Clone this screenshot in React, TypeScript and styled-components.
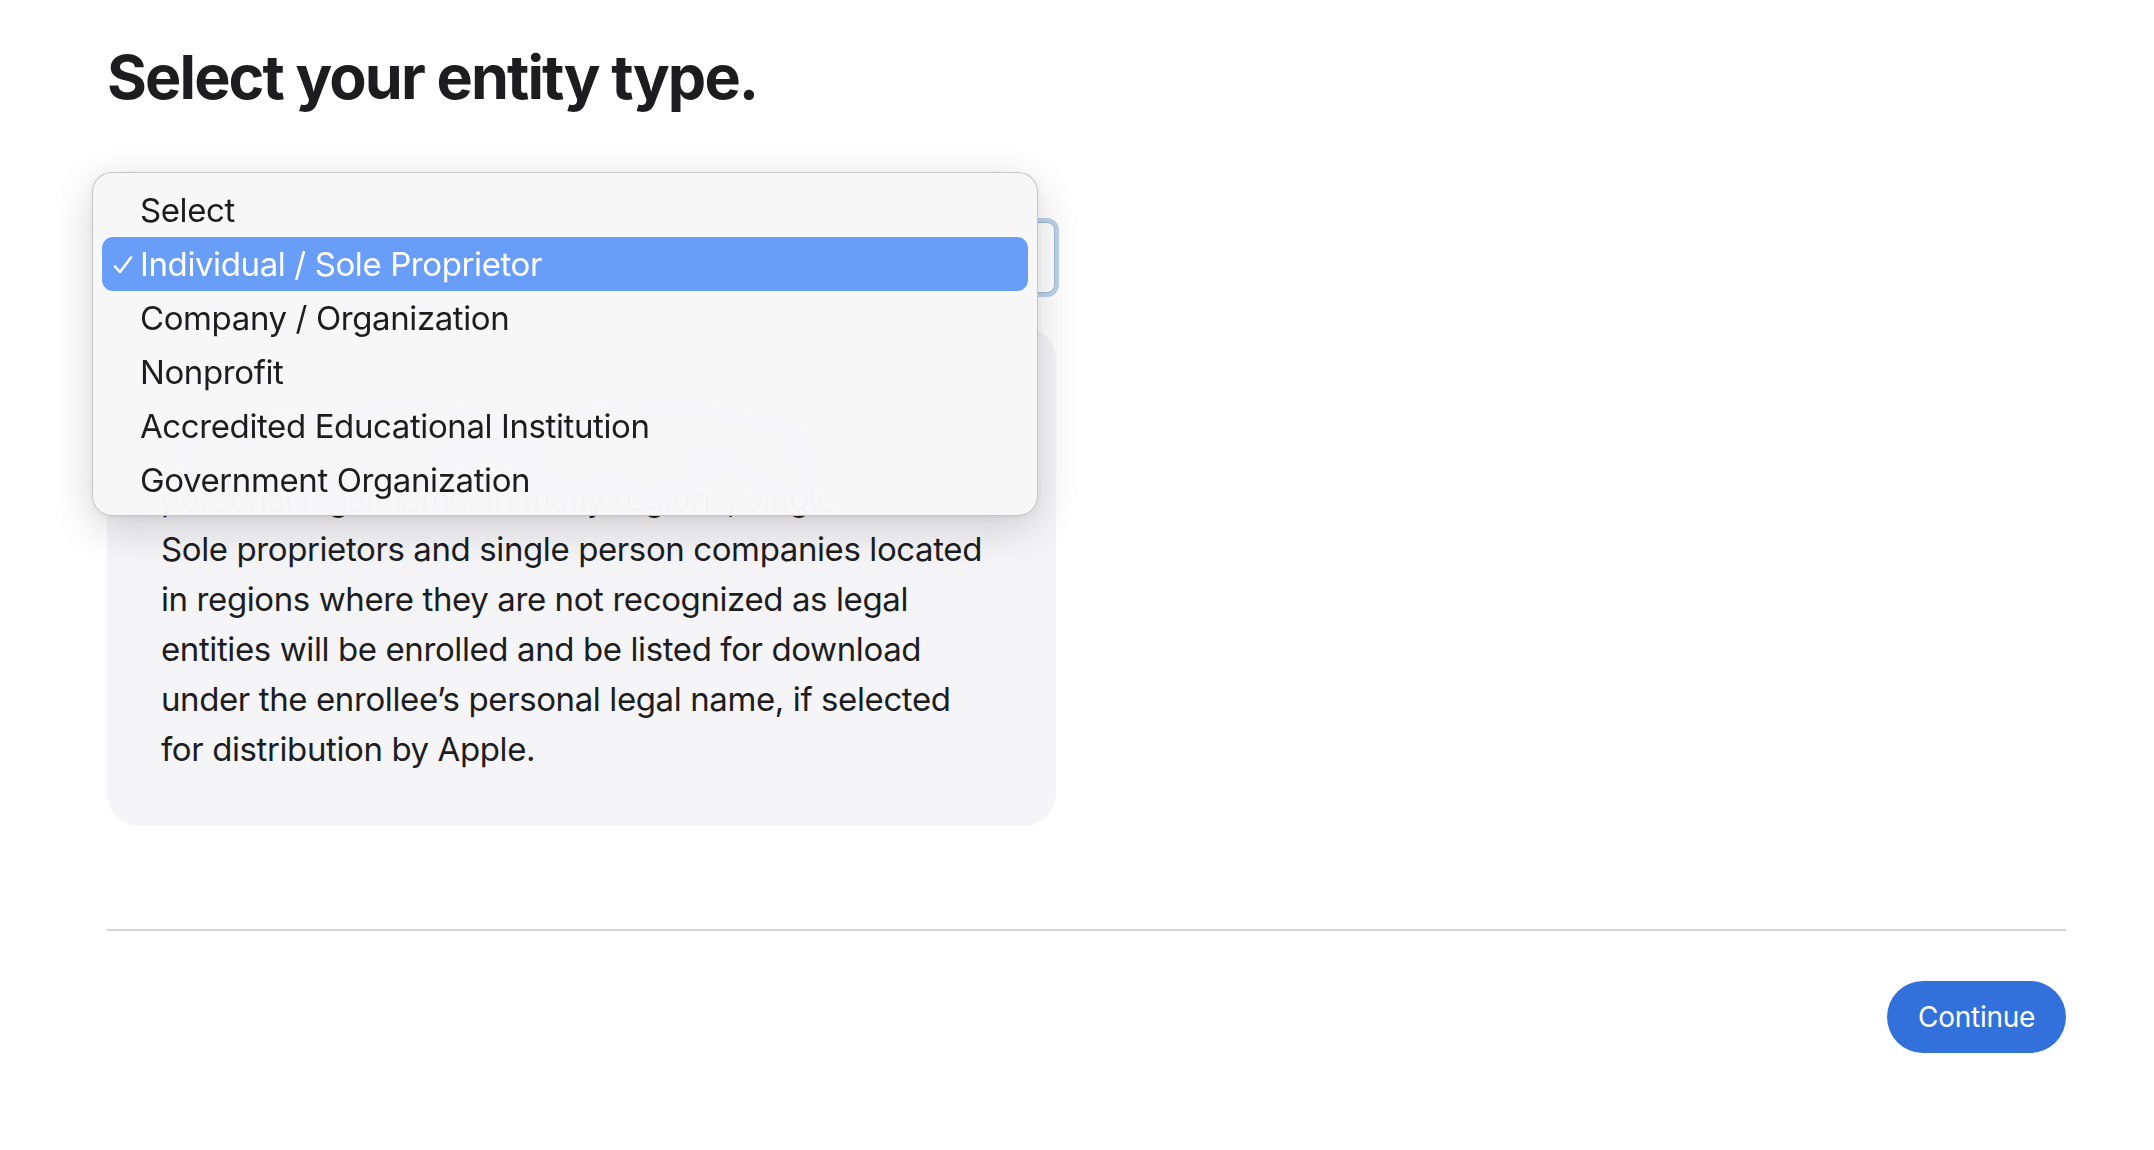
import React from "react";
import styled, { createGlobalStyle } from "styled-components";

const Global = createGlobalStyle`
  html, body { margin: 0; padding: 0; background: #ffffff; }
  body {
    font-family: Inter, "Noto Sans", "Liberation Sans", sans-serif;
    color: #1d1d1f;
    -webkit-font-smoothing: antialiased;
  }
`;

const Page = styled.main`
  padding: 0 88px 60px 107px;
  display: flex;
  flex-direction: column;
`;

const Heading = styled.h1`
  margin: 43px 0 0;
  font-size: 61px;
  line-height: 68px;
  font-weight: 700;
  letter-spacing: -0.031em;
  color: #1d1d1f;
`;

const FieldWrap = styled.div`
  position: relative;
  z-index: 5;
  width: 948px;
  margin-top: 111px;
`;

const SelectField = styled.div`
  box-sizing: border-box;
  height: 71px;
  border: 1px solid #9fb8d6;
  border-radius: 8px;
  box-shadow: 0 0 0 4px #bcd2ea;
  background: #ffffff;
  padding: 6px 24px;
  display: flex;
  flex-direction: column;
  justify-content: center;
`;

const FieldLabel = styled.span`
  padding-left: 150px;
  font-size: 22px;
  line-height: 26px;
  color: #8e8e93;
`;

const FieldValue = styled.span`
  font-size: 30px;
  line-height: 34px;
  color: #1d1d1f;
`;

const Menu = styled.ul`
  position: absolute;
  left: -15px;
  top: -50px;
  width: 946px;
  box-sizing: border-box;
  margin: 0;
  padding: 10px 9px 8px;
  list-style: none;
  border-radius: 20px;
  border: 1px solid rgba(0, 0, 0, 0.2);
  background: rgba(247, 247, 248, 0.975);
  backdrop-filter: blur(30px);
  -webkit-backdrop-filter: blur(30px);
  box-shadow: 0 12px 44px rgba(0, 0, 0, 0.16), 0 2px 8px rgba(0, 0, 0, 0.06);
  z-index: 10;
`;

const MenuItem = styled.li<{ $active?: boolean }>`
  position: relative;
  height: 54px;
  display: flex;
  align-items: center;
  padding-left: 38px;
  border-radius: 11px;
  font-size: 33px;
  letter-spacing: -0.012em;
  color: ${(p) => (p.$active ? "#ffffff" : "#1d1d1f")};
  background: ${(p) => (p.$active ? "#689ef8" : "transparent")};
`;

const Check = styled.svg`
  position: absolute;
  left: 11px;
  top: 19px;
  width: 20px;
  height: 18px;
`;

const Card = styled.section`
  position: relative;
  z-index: 1;
  box-sizing: border-box;
  width: 949px;
  margin-top: 34px;
  padding: 47px 54px 52px;
  border-radius: 32px;
  background: #f5f5f7;
`;

const Body = styled.p`
  margin: 0;
  font-size: 33px;
  line-height: 50px;
  letter-spacing: -0.012em;
  color: #1d1d1f;
`;

const Divider = styled.hr`
  margin: 103px 0 0;
  border: 0;
  height: 2px;
  background: #d2d2d7;
`;

const Footer = styled.div`
  display: flex;
  justify-content: flex-end;
  margin-top: 50px;
`;

const ContinueButton = styled.button`
  height: 72px;
  padding: 0 31px;
  border: 0;
  border-radius: 36px;
  background: #3271dc;
  color: #ffffff;
  font-family: Inter, "Noto Sans", sans-serif;
  font-size: 28px;
  letter-spacing: -0.01em;
  cursor: pointer;
`;

const options = [
  "Select",
  "Individual / Sole Proprietor",
  "Company / Organization",
  "Nonprofit",
  "Accredited Educational Institution",
  "Government Organization",
];

const lines = [
  "If you’re an individual or sole proprietor, your",
  "apps will be listed on the App Store under your",
  "personal legal name. In many regions, single",
  "Sole proprietors and single person companies located",
  "in regions where they are not recognized as legal",
  "entities will be enrolled and be listed for download",
  "under the enrollee’s personal legal name, if selected",
  "for distribution by Apple.",
];

export default function App() {
  return (
    <>
      <Global />
      <Page>
        <Heading>Select your entity type.</Heading>
        <FieldWrap>
          <SelectField>
            <FieldLabel>Entity type</FieldLabel>
            <FieldValue>Individual / Sole Proprietor</FieldValue>
          </SelectField>
          <Menu>
            {options.map((o, i) => (
              <MenuItem key={o} $active={i === 1}>
                {i === 1 && (
                  <Check viewBox="0 0 20 18" fill="none">
                    <path
                      d="M2 10.5 L7 16 L18 1.5"
                      stroke="#ffffff"
                      strokeWidth="2.6"
                      strokeLinecap="round"
                      strokeLinejoin="round"
                    />
                  </Check>
                )}
                {o}
              </MenuItem>
            ))}
          </Menu>
        </FieldWrap>
        <Card>
          <Body>
            {lines.map((l, i) => (
              <React.Fragment key={i}>
                {l}
                {i < lines.length - 1 && <br />}
              </React.Fragment>
            ))}
          </Body>
        </Card>
        <Divider />
        <Footer>
          <ContinueButton>Continue</ContinueButton>
        </Footer>
      </Page>
    </>
  );
}
